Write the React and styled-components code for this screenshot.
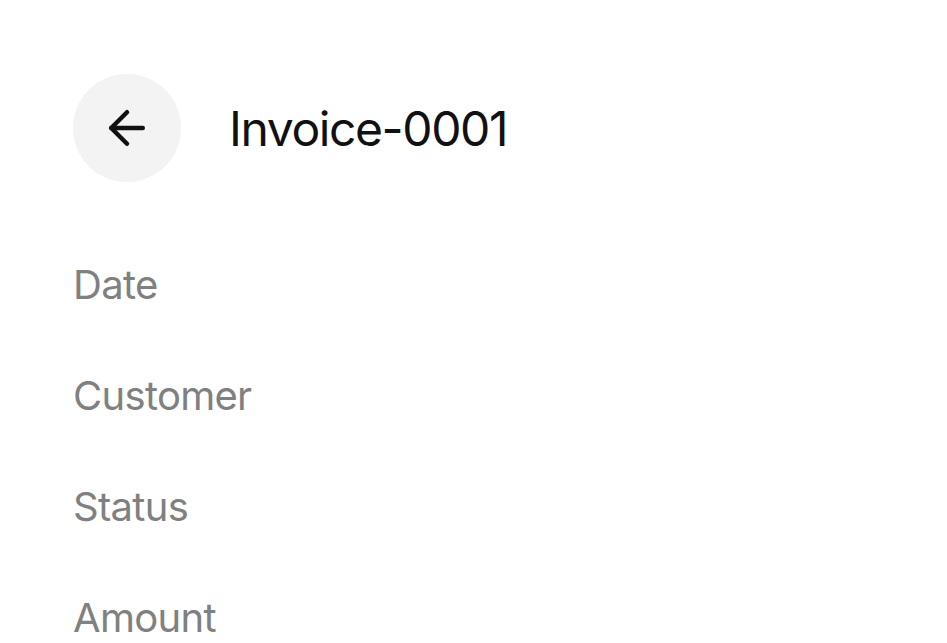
import React from "react";
import styled, { createGlobalStyle } from "styled-components";
import { ArrowLeft } from "lucide-react";

const Global = createGlobalStyle`
  html, body { margin: 0; padding: 0; background: #ffffff; }
  body { font-family: Inter, "Noto Sans", sans-serif; -webkit-font-smoothing: antialiased; }
`;

const Page = styled.div`
  padding: 74px 73px 0;
  box-sizing: border-box;
  height: 643px;
  overflow: hidden;
`;

const Header = styled.header`
  display: flex;
  align-items: center;
  gap: 48px;
`;

const BackButton = styled.button`
  width: 108px;
  height: 108px;
  border-radius: 50%;
  border: none;
  background: #f3f3f3;
  display: flex;
  align-items: center;
  justify-content: center;
  padding: 0;
  color: #111111;
  cursor: pointer;
`;

const Title = styled.h1`
  margin: 0;
  font-size: 48px;
  font-weight: 400;
  color: #111111;
  letter-spacing: -1.4px;
`;

const FieldList = styled.div`
  display: flex;
  flex-direction: column;
  gap: 63px;
  margin-top: 79px;
`;

const Label = styled.div`
  font-size: 40px;
  line-height: 48px;
  color: #808080;
  font-weight: 400;
  letter-spacing: -0.7px;
`;

const fields = ["Date", "Customer", "Status", "Amount"];

export default function App() {
  return (
    <>
      <Global />
      <Page>
        <Header>
          <BackButton aria-label="Back">
            <ArrowLeft size={54} strokeWidth={2} />
          </BackButton>
          <Title>Invoice-0001</Title>
        </Header>
        <FieldList>
          {fields.map((f) => (
            <Label key={f}>{f}</Label>
          ))}
        </FieldList>
      </Page>
    </>
  );
}
